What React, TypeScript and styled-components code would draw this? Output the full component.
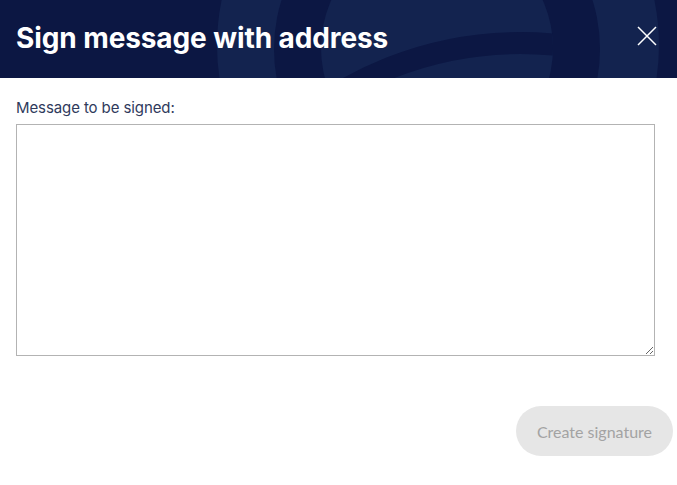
import { createGlobalStyle, styled } from "styled-components";

const GlobalStyle = createGlobalStyle`
  * {
    box-sizing: border-box;
  }

  body {
    margin: 0;
    background: #ffffff;
    font-family: "Inter", "Lato", "Noto Sans", sans-serif;
  }
`;

const Modal = styled.div`
  width: 677px;
  height: 485px;
  background: #ffffff;
  display: flex;
  flex-direction: column;
`;

const Header = styled.header`
  position: relative;
  height: 78px;
  overflow: hidden;
  background: #0c1743;
  display: flex;
  align-items: center;
  justify-content: space-between;
  padding: 0 20px 0 16px;
`;

const Backdrop = styled.svg`
  position: absolute;
  inset: 0;
  width: 100%;
  height: 100%;
`;

const Title = styled.h1`
  position: relative;
  margin: 0;
  padding-bottom: 2px;
  color: #ffffff;
  font-size: 28px;
  font-weight: 700;
  letter-spacing: -0.1px;
`;

const CloseButton = styled.button`
  position: relative;
  width: 20px;
  height: 20px;
  padding: 0;
  margin-top: -6px;
  border: none;
  background: transparent;
  cursor: pointer;
  display: flex;
`;

const Body = styled.div`
  display: flex;
  flex-direction: column;
  padding: 21px 22px 0 16px;
`;

const Label = styled.label`
  color: #2f3a5c;
  font-size: 15px;
  font-weight: 400;
  line-height: 18px;
  letter-spacing: -0.1px;
`;

const MessageInput = styled.textarea`
  margin-top: 7px;
  width: 100%;
  height: 232px;
  border: 1px solid #b3b3b3;
  border-radius: 0;
  padding: 8px;
  font-family: inherit;
  font-size: 15px;
  outline: none;
`;

const Actions = styled.div`
  display: flex;
  justify-content: flex-end;
  padding: 50px 4px 0 0;
`;

const SubmitButton = styled.button`
  width: 157px;
  height: 50px;
  border: none;
  border-radius: 25px;
  background: #e6e6e6;
  color: #a3a3a3;
  font-family: "Lato", sans-serif;
  font-size: 16px;
  cursor: default;
`;

export default function App() {
  return (
    <>
      <GlobalStyle />
      <Modal>
        <Header>
          <Backdrop viewBox="0 0 677 78" preserveAspectRatio="none">
            <defs>
              <clipPath id="inner-disk">
                <circle cx="437" cy="48" r="116" />
              </clipPath>
            </defs>
            <circle cx="438" cy="45" r="221" fill="#13234f" />
            <circle cx="437" cy="49" r="163" fill="#0c1743" />
            <circle cx="437" cy="48" r="116" fill="#13234f" />
            <circle
              cx="520"
              cy="395"
              r="352"
              fill="none"
              stroke="#0c1743"
              strokeWidth="22"
              clipPath="url(#inner-disk)"
            />
          </Backdrop>
          <Title>Sign message with address</Title>
          <CloseButton aria-label="Close">
            <svg width="20" height="20" viewBox="0 0 20 20">
              <path
                d="M1 1L19 19M19 1L1 19"
                stroke="#ffffff"
                strokeWidth="1.5"
                fill="none"
              />
            </svg>
          </CloseButton>
        </Header>
        <Body>
          <Label htmlFor="message">Message to be signed:</Label>
          <MessageInput id="message" />
        </Body>
        <Actions>
          <SubmitButton disabled>Create signature</SubmitButton>
        </Actions>
      </Modal>
    </>
  );
}
